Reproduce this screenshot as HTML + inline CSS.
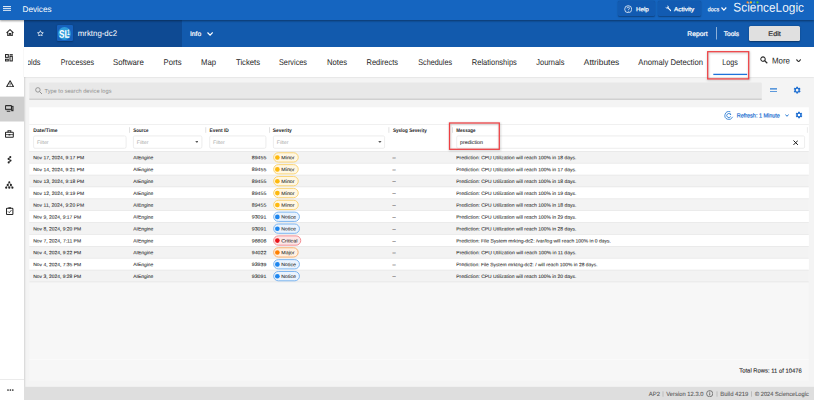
<!DOCTYPE html><html><head><meta charset="utf-8"><title>Devices</title><style>
html,body{margin:0;padding:0;}body{width:814px;height:400px;overflow:hidden;position:relative;background:#f4f4f4;font-family:"Liberation Sans", sans-serif;}
#r{position:absolute;left:0;top:0;width:814px;height:400px;overflow:hidden;}
#r>div,#r>svg{position:absolute;}
#r span{position:absolute;white-space:nowrap;line-height:1;transform-origin:0 50%;display:block;}
#clip{left:28.2px;top:50px;width:16px;height:22px;overflow:hidden;}
</style></head><body><div id="r">
<div style="left:0px;top:19.5px;width:24px;height:380.5px;background:#fff;box-shadow:0 0 2.5px rgba(0,0,0,.28);"></div>
<div style="left:24px;top:46.5px;width:790px;height:30.4px;background:#fff;box-shadow:0 .5px 1.5px rgba(0,0,0,.13);"></div>
<div style="left:24px;top:19.5px;width:790px;height:27px;background:#125aad;"></div>
<div style="left:24px;top:19.5px;width:157.8px;height:27px;background:#0e4a93;"></div>
<div style="left:0px;top:0px;width:814px;height:19.5px;background:#1565c0;box-shadow:0 .5px 2px rgba(0,0,0,.4);"></div>
<div style="left:617.5px;top:1px;width:37.5px;height:15px;background:#125bb2;border-radius:1.5px;box-shadow:0 .5px 1.5px rgba(0,0,0,.35);"></div>
<div style="left:658px;top:1px;width:42.5px;height:15px;background:#125bb2;border-radius:1.5px;box-shadow:0 .5px 1.5px rgba(0,0,0,.35);"></div>
<div style="left:749px;top:25.5px;width:51px;height:15px;background:#e0e0e0;border-radius:1.5px;box-shadow:0 .5px 1.5px rgba(0,0,0,.4);"></div>
<div style="left:56.8px;top:25px;width:16.4px;height:16px;background:#1661bd;border-radius:1px;box-shadow:0 .5px 1.5px rgba(0,0,0,.25);"></div>
<div style="left:58.4px;top:26.5px;width:13px;height:13px;background:radial-gradient(circle at 45% 40%,#35a3e0,#2391d3);border-radius:50%;"></div>
<svg style="left:0;top:0" width="814" height="400" viewBox="0 0 814 400">
<rect x="0.00" y="96.60" width="24.00" height="24.90" fill="#cfcfcf"/>
<rect x="0.00" y="379.10" width="24.00" height="0.70" fill="#e2e2e2"/>
<rect x="24.00" y="386.80" width="790.00" height="13.20" fill="#dedede"/>
<rect x="29.30" y="107.30" width="779.50" height="273.60" fill="#f7f7f7"/>
<rect x="29.30" y="358.90" width="779.50" height="0.70" fill="#fcfcfc"/>
<rect x="716.00" y="27.00" width="0.70" height="12.50" fill="rgba(255,255,255,.75)"/>
<rect x="713.30" y="73.75" width="33.80" height="1.30" fill="#1f72da"/>
<rect x="29.30" y="82.60" width="732.50" height="16.90" fill="#e8e8e8" rx="1"/>
<rect x="29.30" y="98.75" width="732.50" height="0.80" fill="#b9b9b9"/>
<rect x="29.30" y="107.30" width="779.50" height="44.00" fill="#fff"/>
<rect x="29.30" y="124.10" width="779.50" height="0.60" fill="#e6e6e6"/>
<rect x="129.10" y="127.20" width="0.80" height="5.60" fill="#dadada"/>
<rect x="205.40" y="127.20" width="0.80" height="5.60" fill="#dadada"/>
<rect x="269.10" y="127.20" width="0.80" height="5.60" fill="#dadada"/>
<rect x="388.50" y="127.20" width="0.80" height="5.60" fill="#dadada"/>
<rect x="452.10" y="127.20" width="0.80" height="5.60" fill="#dadada"/>
<rect x="806.90" y="127.20" width="0.80" height="5.60" fill="#e6e6e6"/>
<rect x="33.60" y="135.90" width="92.50" height="12.40" fill="#fff" stroke="#e8e8e8" stroke-width="0.8" rx="1.4"/>
<rect x="133.40" y="135.90" width="68.50" height="12.40" fill="#fff" stroke="#e8e8e8" stroke-width="0.8" rx="1.4"/>
<rect x="209.70" y="135.90" width="56.20" height="12.40" fill="#fff" stroke="#e8e8e8" stroke-width="0.8" rx="1.4"/>
<rect x="273.40" y="135.90" width="111.20" height="12.40" fill="#fff" stroke="#e8e8e8" stroke-width="0.8" rx="1.4"/>
<rect x="456.70" y="135.90" width="347.90" height="12.40" fill="#fff" stroke="#e8e8e8" stroke-width="0.8" rx="1.4"/>
<rect x="29.30" y="151.30" width="779.50" height="11.88" fill="#f3f3f3"/>
<rect x="29.30" y="163.18" width="779.50" height="11.88" fill="#fff"/>
<rect x="29.30" y="175.05" width="779.50" height="11.88" fill="#f3f3f3"/>
<rect x="29.30" y="186.93" width="779.50" height="11.88" fill="#fff"/>
<rect x="29.30" y="198.80" width="779.50" height="11.88" fill="#f3f3f3"/>
<rect x="29.30" y="210.68" width="779.50" height="11.88" fill="#fff"/>
<rect x="29.30" y="222.55" width="779.50" height="11.88" fill="#f3f3f3"/>
<rect x="29.30" y="234.43" width="779.50" height="11.88" fill="#fff"/>
<rect x="29.30" y="246.30" width="779.50" height="11.88" fill="#f3f3f3"/>
<rect x="29.30" y="258.18" width="779.50" height="11.88" fill="#fff"/>
<rect x="29.30" y="270.05" width="779.50" height="11.88" fill="#f3f3f3"/>
<rect x="29.30" y="151.00" width="779.50" height="0.60" fill="#e3e3e3"/>
<rect x="29.30" y="162.88" width="779.50" height="0.60" fill="#e3e3e3"/>
<rect x="29.30" y="174.75" width="779.50" height="0.60" fill="#e3e3e3"/>
<rect x="29.30" y="186.62" width="779.50" height="0.60" fill="#e3e3e3"/>
<rect x="29.30" y="198.50" width="779.50" height="0.60" fill="#e3e3e3"/>
<rect x="29.30" y="210.38" width="779.50" height="0.60" fill="#e3e3e3"/>
<rect x="29.30" y="222.25" width="779.50" height="0.60" fill="#e3e3e3"/>
<rect x="29.30" y="234.12" width="779.50" height="0.60" fill="#e3e3e3"/>
<rect x="29.30" y="246.00" width="779.50" height="0.60" fill="#e3e3e3"/>
<rect x="29.30" y="257.88" width="779.50" height="0.60" fill="#e3e3e3"/>
<rect x="29.30" y="269.75" width="779.50" height="0.60" fill="#e3e3e3"/>
<rect x="29.30" y="281.62" width="779.50" height="0.60" fill="#e3e3e3"/>
<rect x="273.65" y="152.75" width="24.60" height="9.30" fill="#fff7e3" stroke="#f9d06a" stroke-width="0.9" rx="4.65"/>
<circle cx="277.35" cy="157.50" r="2.35" fill="#fdb90f"/>
<rect x="273.65" y="164.62" width="24.60" height="9.30" fill="#fff7e3" stroke="#f9d06a" stroke-width="0.9" rx="4.65"/>
<circle cx="277.35" cy="169.38" r="2.35" fill="#fdb90f"/>
<rect x="273.65" y="176.50" width="24.60" height="9.30" fill="#fff7e3" stroke="#f9d06a" stroke-width="0.9" rx="4.65"/>
<circle cx="277.35" cy="181.25" r="2.35" fill="#fdb90f"/>
<rect x="273.65" y="188.38" width="24.60" height="9.30" fill="#fff7e3" stroke="#f9d06a" stroke-width="0.9" rx="4.65"/>
<circle cx="277.35" cy="193.12" r="2.35" fill="#fdb90f"/>
<rect x="273.65" y="200.25" width="24.60" height="9.30" fill="#fff7e3" stroke="#f9d06a" stroke-width="0.9" rx="4.65"/>
<circle cx="277.35" cy="205.00" r="2.35" fill="#fdb90f"/>
<rect x="273.65" y="212.12" width="25.80" height="9.30" fill="#eaf3fd" stroke="#72afee" stroke-width="0.9" rx="4.65"/>
<circle cx="277.35" cy="216.88" r="2.35" fill="#1e86ee"/>
<rect x="273.65" y="224.00" width="25.80" height="9.30" fill="#eaf3fd" stroke="#72afee" stroke-width="0.9" rx="4.65"/>
<circle cx="277.35" cy="228.75" r="2.35" fill="#1e86ee"/>
<rect x="273.65" y="235.88" width="27.10" height="9.30" fill="#fde7e7" stroke="#f2838a" stroke-width="0.9" rx="4.65"/>
<circle cx="277.35" cy="240.62" r="2.35" fill="#ea161c"/>
<rect x="273.65" y="247.75" width="24.50" height="9.30" fill="#fff0e2" stroke="#f8a962" stroke-width="0.9" rx="4.65"/>
<circle cx="277.35" cy="252.50" r="2.35" fill="#ff8000"/>
<rect x="273.65" y="259.62" width="25.80" height="9.30" fill="#eaf3fd" stroke="#72afee" stroke-width="0.9" rx="4.65"/>
<circle cx="277.35" cy="264.38" r="2.35" fill="#1e86ee"/>
<rect x="273.65" y="271.50" width="25.80" height="9.30" fill="#eaf3fd" stroke="#72afee" stroke-width="0.9" rx="4.65"/>
<circle cx="277.35" cy="276.25" r="2.35" fill="#1e86ee"/>
<rect x="662.70" y="391.30" width="0.60" height="5.40" fill="#a5a5a5"/>
<rect x="716.70" y="391.30" width="0.60" height="5.40" fill="#a5a5a5"/>
<rect x="751.20" y="391.30" width="0.60" height="5.40" fill="#a5a5a5"/>
<rect x="708.10" y="52.40" width="41.00" height="27.20" fill="none" stroke="rgba(0,0,0,.2)" stroke-width="1.8" style="filter:blur(.8px)"/>
<rect x="707.70" y="51.70" width="41.00" height="27.20" fill="none" stroke="#ee3f42" stroke-width="1.25"/>
<rect x="449.90" y="123.70" width="49.80" height="26.30" fill="none" stroke="rgba(0,0,0,.2)" stroke-width="1.8" style="filter:blur(.8px)"/>
<rect x="449.50" y="123.00" width="49.80" height="26.30" fill="none" stroke="#ee3f42" stroke-width="1.25"/>
</svg>
<!-- hamburger -->
<svg style="left:3.100px;top:5.900px" width="8" height="5.400" viewBox="0 0 8 5.400"><path d="M0 .6h8M0 2.650h8M0 4.700h8" stroke="#fff" stroke-width=".95"/></svg>
<!-- sidebar: home -->
<svg style="left:6.3px;top:28.8px" width="8" height="7.4" viewBox="0 0 16 15"><path d="M1 8 8 1.3 15 8M3.4 6.6V13.8H6.6V9.4H9.4V13.8H12.6V6.6" fill="none" stroke="#272727" stroke-width="2.1" stroke-linejoin="round"/></svg>
<!-- dashboard -->
<svg style="left:5.2px;top:54px" width="8" height="7.6" viewBox="0 0 16 15"><g fill="none" stroke="#272727" stroke-width="2.1"><rect x="1" y="1" width="5.6" height="5.6"/><rect x="10" y="4.6" width="4.6" height="9.2"/><rect x="1" y="10.4" width="5.6" height="3.4"/></g><rect x="9.2" y="0.2" width="6.4" height="2.6" fill="#272727"/></svg>
<!-- warning -->
<svg style="left:5.9px;top:79.6px" width="8.2" height="7.4" viewBox="0 0 16 14.5"><path d="M8 1.6 14.8 13.4H1.2Z" fill="none" stroke="#272727" stroke-width="2.1" stroke-linejoin="round"/><path d="M8 6v3.6M8 10.8v1.3" stroke="#272727" stroke-width="1.6"/></svg>
<!-- devices (active) -->
<svg style="left:4.900px;top:104.800px" width="9" height="7" viewBox="0 0 18 14"><path d="M1.100 1.100h11.800v8.200H1.100Z" fill="#a9a9a9" stroke="#272727" stroke-width="2"/><path d="M2.200 4.900h9.600" stroke="#e6e6e6" stroke-width="1.300"/><rect x="12.400" y="1.800" width="4.600" height="10.600" fill="#272727"/><rect x="14" y="3.600" width="1.400" height="6" fill="#8a8a8a"/><path d="M3.600 12.600h7" stroke="#272727" stroke-width="1.800"/></svg>
<!-- briefcase -->
<svg style="left:5.2px;top:130.1px" width="8.8" height="7.8" viewBox="0 0 17.6 15.6"><g fill="none" stroke="#272727" stroke-width="2.1"><rect x="1" y="4.4" width="15.6" height="10.2" rx="1"/><path d="M6 4.4V1.6h5.6V4.4"/><path d="M1 9.2h15.6" stroke-width="1.5"/></g><rect x="7" y="8" width="3.6" height="2.8" fill="#272727"/></svg>
<!-- nodes -->
<svg style="left:7.2px;top:156.2px" width="5.2" height="7.6" viewBox="0 0 10.4 15.2"><g fill="#272727"><circle cx="6.6" cy="2.2" r="2.1"/><circle cx="3.2" cy="5.8" r="2.1"/><circle cx="7" cy="9.2" r="2.1"/><circle cx="3.4" cy="12.8" r="2.1"/></g><path d="M6.6 2.2 3.2 5.8 7 9.2 3.4 12.8" fill="none" stroke="#272727" stroke-width="1.3"/></svg>
<!-- hierarchy -->
<svg style="left:5.2px;top:181.4px" width="8.6" height="8" viewBox="0 0 17.2 16"><g fill="#272727"><circle cx="8.6" cy="2.4" r="2"/><circle cx="5.4" cy="7.8" r="2.1"/><circle cx="11.8" cy="7.8" r="2.1"/><circle cx="2.4" cy="13.4" r="2.2"/><circle cx="8.6" cy="13.4" r="2.2"/><circle cx="14.8" cy="13.4" r="2.2"/></g><path d="M8.6 2.4 5.4 7.8 2.4 13.4M8.6 2.4 11.8 7.8 14.8 13.4M5.4 7.8 8.6 13.4 11.8 7.8" fill="none" stroke="#272727" stroke-width="1"/></svg>
<!-- checklist -->
<svg style="left:6.4px;top:206.8px" width="7.4" height="8" viewBox="0 0 14.8 16"><rect x="1" y="2.4" width="12.8" height="12.6" rx="1.6" fill="none" stroke="#272727" stroke-width="2.1"/><rect x="4.8" y="0.6" width="5.2" height="2.6" fill="#272727"/><path d="M4 8.8 6.6 11.4 11 6" fill="none" stroke="#272727" stroke-width="1.6"/></svg>
<!-- dots -->
<svg style="left:6.8px;top:389px" width="6.8" height="2" viewBox="0 0 6.8 2"><g fill="#272727"><circle cx="1" cy="1" r=".85"/><circle cx="3.4" cy="1" r=".85"/><circle cx="5.8" cy="1" r=".85"/></g></svg>
<!-- star -->
<svg style="left:36.8px;top:29.8px" width="6.8" height="6.6" viewBox="0 0 24 23"><path d="M12 2.2l3 6.6 7.2.8-5.4 4.9 1.5 7.1L12 18l-6.3 3.6 1.5-7.1L1.8 9.6 9 8.8z" fill="none" stroke="#fff" stroke-width="2.6" stroke-linejoin="round"/></svg>
<!-- info chevron -->
<svg style="left:206.6px;top:31.6px" width="6.2" height="4" viewBox="0 0 6.2 4"><path d="M.5.5 3.1 3.200 5.700.5" fill="none" stroke="#fff" stroke-width="1.150"/></svg>
<!-- help icon -->
<svg style="left:623.8px;top:4.9px" width="8.4" height="8.4" viewBox="0 0 17.2 17.2"><circle cx="8.6" cy="8.6" r="7.2" fill="none" stroke="#fff" stroke-width="1.5"/><path d="M6.2 6.8c0-3.2 5-3.2 5 0 0 1.8-2.4 1.8-2.4 3.8" fill="none" stroke="#fff" stroke-width="1.5"/><circle cx="8.7" cy="12.8" r="1" fill="#fff"/></svg>
<!-- wrench -->
<svg style="left:664.6px;top:5.4px" width="6.6" height="6.6" viewBox="0 0 13.2 13.2"><path d="M1 3.6a3.4 3.4 0 0 0 4.700 3.200l5 5.200a1.100 1.100 0 0 0 1.700-1.500l-5.200-5.100A3.400 3.400 0 0 0 3.800.8l1.800 1.900-.7 2-2 .6z" fill="#fff"/></svg>
<!-- docs chevron -->
<svg style="left:721.3px;top:6.9px" width="5.8" height="4" viewBox="0 0 5.8 4"><path d="M.5.5 2.9 3.1 5.3.5" fill="none" stroke="#fff" stroke-width="1.15"/></svg>
<!-- logo dots -->
<svg style="left:746px;top:.8px" width="13" height="2.800" viewBox="0 0 13 2.800"><circle cx="1.600" cy="1.400" r="1.100" fill="#f5831f"/><circle cx="4.900" cy="1.400" r="1.100" fill="#f9c21a"/><circle cx="8.200" cy="1.400" r="1.100" fill="#2a9df0"/><circle cx="11.500" cy="1.400" r="1.100" fill="#5cc03a"/></svg>
<svg style="left:793.400px;top:5.800px" width="1.800" height="1.800" viewBox="0 0 1.800 1.800"><circle cx=".9" cy=".9" r=".8" fill="#5cc03a"/></svg>
<!-- tabs search -->
<svg style="left:759.6px;top:56.300px" width="8" height="8" viewBox="0 0 8 8"><circle cx="3" cy="3.100" r="2.250" fill="none" stroke="#2c2c2c" stroke-width="1.050"/><path d="M4.700 4.800 7.300 7.300" stroke="#2c2c2c" stroke-width="1.200"/></svg>
<!-- more chevron -->
<svg style="left:795.800px;top:58.800px" width="5.200" height="3.400" viewBox="0 0 5.200 3.400"><path d="M.4.500 2.600 2.800 4.800.5" fill="none" stroke="#333" stroke-width="1.100"/></svg>
<!-- searchbar icon -->
<svg style="left:35.300px;top:86.800px" width="7.600" height="7.600" viewBox="0 0 7.600 7.600"><circle cx="2.900" cy="2.900" r="2.250" fill="none" stroke="#909090" stroke-width=".9"/><path d="M4.600 4.600 7.100 7.100" stroke="#909090" stroke-width="1"/></svg>
<!-- equals icon -->
<svg style="left:769.8px;top:87.8px" width="7" height="4.6" viewBox="0 0 7 4.6"><path d="M0 .8h7M0 3.8h7" stroke="#2a7bd3" stroke-width="1.3"/></svg>
<!-- gear 1 -->
<svg style="left:793.15px;top:85.9px" width="8.3" height="8.3" viewBox="0 0 24 24"><path fill="#1f6fd1" d="M19.4 13c0-.3.1-.6.1-1s0-.7-.1-1l2.100-1.600c.2-.2.200-.4.100-.600l-2-3.500c-.1-.2-.4-.3-.6-.2l-2.500 1c-.5-.4-1.100-.7-1.700-1l-.4-2.600c0-.3-.2-.5-.5-.5h-4c-.3 0-.5.200-.5.400l-.4 2.700c-.6.200-1.100.6-1.700 1l-2.500-1c-.2-.1-.5 0-.6.200l-2 3.500c-.1.200-.1.500.1.600L4.600 11c0 .3-.1.600-.1 1s0 .7.100 1l-2.100 1.600c-.2.200-.2.400-.1.600l2 3.500c.1.200.4.300.6.200l2.500-1c.5.400 1.100.7 1.700 1l.4 2.600c0 .3.200.5.500.5h4c.3 0 .5-.2.500-.4l.4-2.700c.6-.2 1.100-.6 1.700-1l2.500 1c.2.100.5 0 .6-.2l2-3.500c.1-.2.100-.5-.1-.6L19.400 13zM12 15.800a3.800 3.800 0 1 1 0-7.600 3.800 3.800 0 0 1 0 7.600z"/></svg>
<!-- refresh -->
<svg style="left:720px;top:106px" width="18" height="18" viewBox="0 0 18 18"><g fill="none" stroke="#2a7bd3" stroke-width=".85" stroke-linecap="round"><path d="M9.940 5.640A4 4 0 1 0 12.530 11.190"/><path d="M10.400 8.100A2.100 2.100 0 1 0 10.510 10.850"/></g><circle cx="10.500" cy="8.250" r=".7" fill="#2a7bd3"/></svg>
<!-- refresh chevron -->
<svg style="left:784.6px;top:114px" width="4" height="3" viewBox="0 0 4 3"><path d="M.4.5 2 2.300 3.600.5" fill="none" stroke="#2a7bd3" stroke-width="1"/></svg>
<!-- gear 2 -->
<svg style="left:795px;top:111.4px" width="8" height="8" viewBox="0 0 24 24"><path fill="#1f6fd1" d="M19.4 13c0-.3.1-.6.1-1s0-.7-.1-1l2.100-1.600c.2-.2.200-.4.100-.600l-2-3.500c-.1-.2-.4-.3-.6-.2l-2.500 1c-.5-.4-1.100-.7-1.700-1l-.4-2.600c0-.3-.2-.5-.5-.5h-4c-.3 0-.5.200-.5.400l-.4 2.700c-.6.200-1.100.6-1.700 1l-2.500-1c-.2-.1-.5 0-.6.200l-2 3.500c-.1.200-.1.500.1.600L4.600 11c0 .3-.1.600-.1 1s0 .7.100 1l-2.100 1.600c-.2.200-.2.400-.1.600l2 3.500c.1.200.4.300.6.200l2.500-1c.5.400 1.100.7 1.700 1l.4 2.600c0 .3.200.5.500.5h4c.3 0 .5-.2.500-.4l.4-2.700c.6-.2 1.100-.6 1.700-1l2.500 1c.2.100.5 0 .6-.2l2-3.500c.1-.2.100-.5-.1-.6L19.400 13zM12 15.800a3.800 3.800 0 1 1 0-7.600 3.800 3.800 0 0 1 0 7.600z"/></svg>
<!-- dropdown arrows -->
<svg style="left:194.6px;top:141px" width="3.8" height="2.2" viewBox="0 0 3.8 2.2"><path d="M.2 0h3.400L1.900 2z" fill="#5a5a5a"/></svg>
<svg style="left:377.900px;top:141px" width="3.8" height="2.2" viewBox="0 0 3.8 2.2"><path d="M.2 0h3.400L1.900 2z" fill="#5a5a5a"/></svg>
<!-- clear x -->
<svg style="left:792.8px;top:139.600px" width="5.4" height="5.400" viewBox="0 0 5.4 5.400"><path d="M.5.500 4.900 4.900M4.900.5.500 4.900" stroke="#1a1a1a" stroke-width="1.0"/></svg>
<!-- footer info -->
<svg style="left:705.800px;top:390px" width="7.400" height="7.400" viewBox="0 0 14.800 14.800"><circle cx="7.400" cy="7.400" r="6.200" fill="none" stroke="#4a4a4a" stroke-width="1.300"/><path d="M7.400 6.400v4.400" stroke="#4a4a4a" stroke-width="1.500"/><circle cx="7.400" cy="4.200" r="1" fill="#4a4a4a"/></svg>
<!-- SL1 text -->
<span style="left:59px;top:28px;font-size:11px;font-weight:700;color:#fff;transform:translate(0.00px,0.70px) scaleX(0.74) skewY(.05deg)">SL</span>
<span style="left:67px;top:28px;font-size:8px;font-weight:700;color:#fff;transform:translate(0.10px,0.90px) scaleX(0.62) skewY(.05deg)">1</span>

<span style="left:22px;top:4px;font-size:8.3px;color:#fff;font-weight:400;transform:translate(0.50px,0.90px) scaleX(0.9859) skewY(.05deg);">Devices</span>
<span style="left:636px;top:6px;font-size:6.0px;color:#fff;font-weight:400;transform:translate(0.00px,0.20px) scaleX(1.0370) skewY(.05deg);-webkit-text-stroke:.22px currentColor;">Help</span>
<span style="left:674px;top:6px;font-size:6.0px;color:#fff;font-weight:400;transform:translate(0.00px,0.20px) scaleX(1.0675) skewY(.05deg);-webkit-text-stroke:.22px currentColor;">Activity</span>
<span style="left:707px;top:6px;font-size:6.0px;color:#fff;font-weight:400;transform:translate(0.80px,0.20px) scaleX(0.8985) skewY(.05deg);-webkit-text-stroke:.15px currentColor;">docs</span>
<span style="left:733px;top:1px;font-size:12.6px;color:rgba(255,255,255,.95);font-weight:400;transform:translate(0.30px,0.60px) scaleX(0.9436) skewY(.05deg);">ScienceLogic</span>
<span style="left:77px;top:30px;font-size:8.1px;color:#fff;font-weight:400;transform:translate(0.80px,0.00px) scaleX(0.9683) skewY(.05deg);">mrktng-dc2</span>
<span style="left:190px;top:31px;font-size:6.6px;color:#fff;font-weight:400;transform:translate(0.00px,0.00px) scaleX(1.0182) skewY(.05deg);-webkit-text-stroke:.2px currentColor;">Info</span>
<span style="left:687px;top:31px;font-size:6.6px;color:#fff;font-weight:400;transform:translate(0.30px,0.10px) scaleX(1.0204) skewY(.05deg);-webkit-text-stroke:.22px currentColor;">Report</span>
<span style="left:723px;top:31px;font-size:6.6px;color:#fff;font-weight:400;transform:translate(0.80px,0.10px) scaleX(0.9866) skewY(.05deg);-webkit-text-stroke:.22px currentColor;">Tools</span>
<span style="left:768px;top:31px;font-size:6.6px;color:#333;font-weight:400;transform:translate(0.30px,0.10px) scaleX(1.0989) skewY(.05deg);-webkit-text-stroke:.22px currentColor;">Edit</span>
<span style="left:60px;top:58px;font-size:8.3px;color:#262626;font-weight:400;transform:translate(0.80px,0.00px) scaleX(0.8571) skewY(.05deg);">Processes</span>
<span style="left:113px;top:58px;font-size:8.3px;color:#262626;font-weight:400;transform:translate(0.00px,0.00px) scaleX(0.9405) skewY(.05deg);">Software</span>
<span style="left:163px;top:58px;font-size:8.3px;color:#262626;font-weight:400;transform:translate(0.50px,0.00px) scaleX(0.9290) skewY(.05deg);">Ports</span>
<span style="left:201px;top:58px;font-size:8.3px;color:#262626;font-weight:400;transform:translate(0.00px,0.00px) scaleX(0.9293) skewY(.05deg);">Map</span>
<span style="left:236px;top:58px;font-size:8.3px;color:#262626;font-weight:400;transform:translate(0.00px,0.00px) scaleX(0.9242) skewY(.05deg);">Tickets</span>
<span style="left:279px;top:58px;font-size:8.3px;color:#262626;font-weight:400;transform:translate(0.00px,0.00px) scaleX(0.8797) skewY(.05deg);">Services</span>
<span style="left:327px;top:58px;font-size:8.3px;color:#262626;font-weight:400;transform:translate(0.00px,0.00px) scaleX(0.9222) skewY(.05deg);">Notes</span>
<span style="left:366px;top:58px;font-size:8.3px;color:#262626;font-weight:400;transform:translate(0.50px,0.00px) scaleX(0.8988) skewY(.05deg);">Redirects</span>
<span style="left:418px;top:58px;font-size:8.3px;color:#262626;font-weight:400;transform:translate(0.30px,0.00px) scaleX(0.8697) skewY(.05deg);">Schedules</span>
<span style="left:471px;top:58px;font-size:8.3px;color:#262626;font-weight:400;transform:translate(0.80px,0.00px) scaleX(0.9034) skewY(.05deg);">Relationships</span>
<span style="left:536px;top:58px;font-size:8.3px;color:#262626;font-weight:400;transform:translate(0.30px,0.00px) scaleX(0.8988) skewY(.05deg);">Journals</span>
<span style="left:583px;top:58px;font-size:8.3px;color:#262626;font-weight:400;transform:translate(0.80px,0.00px) scaleX(1.0125) skewY(.05deg);">Attributes</span>
<span style="left:638px;top:58px;font-size:8.3px;color:#262626;font-weight:400;transform:translate(0.30px,0.00px) scaleX(0.9291) skewY(.05deg);">Anomaly Detection</span>
<span style="left:722px;top:58px;font-size:8.3px;color:#262626;font-weight:400;transform:translate(0.30px,0.00px) scaleX(0.8611) skewY(.05deg);">Logs</span>
<span style="left:772px;top:56px;font-size:8.3px;color:#262626;font-weight:400;transform:translate(0.00px,0.40px) scaleX(0.9521) skewY(.05deg);">More</span>
<span style="left:44px;top:88px;font-size:5.5px;color:#8c8c8c;font-weight:400;transform:translate(0.50px,0.80px) scaleX(1.0288) skewY(.05deg);">Type to search device logs</span>
<span style="left:736px;top:112px;font-size:6.0px;color:#1f70d2;font-weight:400;transform:translate(0.80px,0.50px) scaleX(0.9080) skewY(.05deg);-webkit-text-stroke:.22px currentColor;">Refresh: 1 Minute</span>
<span style="left:33px;top:128px;font-size:5.1px;color:#262626;font-weight:700;transform:translate(0.30px,0.10px) scaleX(0.9973) skewY(.05deg);">Date/Time</span>
<span style="left:133px;top:128px;font-size:5.1px;color:#262626;font-weight:700;transform:translate(0.30px,0.10px) scaleX(0.8796) skewY(.05deg);">Source</span>
<span style="left:209px;top:128px;font-size:5.1px;color:#262626;font-weight:700;transform:translate(0.50px,0.10px) scaleX(0.9465) skewY(.05deg);">Event ID</span>
<span style="left:272px;top:128px;font-size:5.1px;color:#262626;font-weight:700;transform:translate(0.80px,0.10px) scaleX(0.9582) skewY(.05deg);">Severity</span>
<span style="left:393px;top:128px;font-size:5.1px;color:#262626;font-weight:700;transform:translate(0.00px,0.10px) scaleX(0.8906) skewY(.05deg);">Syslog Severity</span>
<span style="left:456px;top:128px;font-size:5.1px;color:#262626;font-weight:700;transform:translate(0.30px,0.10px) scaleX(0.8917) skewY(.05deg);">Message</span>
<span style="left:36px;top:140px;font-size:5.0px;color:#a9a9a9;font-weight:400;transform:translate(0.90px,0.00px) scaleX(1.0517) skewY(.05deg);">Filter</span>
<span style="left:136px;top:140px;font-size:5.0px;color:#a9a9a9;font-weight:400;transform:translate(0.80px,0.00px) scaleX(1.0517) skewY(.05deg);">Filter</span>
<span style="left:213px;top:140px;font-size:5.0px;color:#a9a9a9;font-weight:400;transform:translate(0.00px,0.00px) scaleX(1.0517) skewY(.05deg);">Filter</span>
<span style="left:276px;top:140px;font-size:5.0px;color:#a9a9a9;font-weight:400;transform:translate(0.80px,0.00px) scaleX(1.0517) skewY(.05deg);">Filter</span>
<span style="left:460px;top:140px;font-size:5.3px;color:#262626;font-weight:400;transform:translate(0.00px,0.10px) scaleX(1.0014) skewY(.05deg);-webkit-text-stroke:.06px currentColor;">prediction</span>
<span style="left:33px;top:156px;font-size:4.85px;color:#262626;font-weight:400;transform:translate(0.20px,0.25px) scaleX(1.0273) skewY(.05deg);-webkit-text-stroke:.06px currentColor;">Nov 17, 2024, 9:17 PM</span>
<span style="left:133px;top:156px;font-size:4.85px;color:#262626;font-weight:400;transform:translate(0.30px,0.25px) scaleX(1.0167) skewY(.05deg);-webkit-text-stroke:.06px currentColor;">AIEngine</span>
<span style="left:251px;top:156px;font-size:4.85px;color:#262626;font-weight:400;transform:translate(0.80px,0.25px) scaleX(1.0753) skewY(.05deg);-webkit-text-stroke:.06px currentColor;">89455</span>
<span style="left:281px;top:156px;font-size:4.85px;color:#262626;font-weight:400;transform:translate(0.30px,0.25px) scaleX(1.0969) skewY(.05deg);-webkit-text-stroke:.06px currentColor;">Minor</span>
<span style="left:392px;top:155px;font-size:5.25px;color:#333;font-weight:400;transform:translate(0.60px,0.35px) scaleX(1.0610) skewY(.05deg);-webkit-text-stroke:.2px currentColor;">–</span>
<span style="left:456px;top:156px;font-size:4.85px;color:#262626;font-weight:400;transform:translate(0.30px,0.25px) scaleX(1.0270) skewY(.05deg);-webkit-text-stroke:.06px currentColor;">Prediction: CPU Utilization will reach 100% in 18 days.</span>
<span style="left:33px;top:168px;font-size:4.85px;color:#262626;font-weight:400;transform:translate(0.20px,0.12px) scaleX(1.0273) skewY(.05deg);-webkit-text-stroke:.06px currentColor;">Nov 14, 2024, 9:21 PM</span>
<span style="left:133px;top:168px;font-size:4.85px;color:#262626;font-weight:400;transform:translate(0.30px,0.12px) scaleX(1.0167) skewY(.05deg);-webkit-text-stroke:.06px currentColor;">AIEngine</span>
<span style="left:251px;top:168px;font-size:4.85px;color:#262626;font-weight:400;transform:translate(0.80px,0.12px) scaleX(1.0753) skewY(.05deg);-webkit-text-stroke:.06px currentColor;">89455</span>
<span style="left:281px;top:168px;font-size:4.85px;color:#262626;font-weight:400;transform:translate(0.30px,0.12px) scaleX(1.0969) skewY(.05deg);-webkit-text-stroke:.06px currentColor;">Minor</span>
<span style="left:392px;top:167px;font-size:5.25px;color:#333;font-weight:400;transform:translate(0.60px,0.22px) scaleX(1.0610) skewY(.05deg);-webkit-text-stroke:.2px currentColor;">–</span>
<span style="left:456px;top:168px;font-size:4.85px;color:#262626;font-weight:400;transform:translate(0.30px,0.12px) scaleX(1.0270) skewY(.05deg);-webkit-text-stroke:.06px currentColor;">Prediction: CPU Utilization will reach 100% in 17 days.</span>
<span style="left:33px;top:180px;font-size:4.85px;color:#262626;font-weight:400;transform:translate(0.20px,0.00px) scaleX(1.0273) skewY(.05deg);-webkit-text-stroke:.06px currentColor;">Nov 13, 2024, 9:18 PM</span>
<span style="left:133px;top:180px;font-size:4.85px;color:#262626;font-weight:400;transform:translate(0.30px,0.00px) scaleX(1.0167) skewY(.05deg);-webkit-text-stroke:.06px currentColor;">AIEngine</span>
<span style="left:251px;top:180px;font-size:4.85px;color:#262626;font-weight:400;transform:translate(0.80px,0.00px) scaleX(1.0753) skewY(.05deg);-webkit-text-stroke:.06px currentColor;">89455</span>
<span style="left:281px;top:180px;font-size:4.85px;color:#262626;font-weight:400;transform:translate(0.30px,0.00px) scaleX(1.0969) skewY(.05deg);-webkit-text-stroke:.06px currentColor;">Minor</span>
<span style="left:392px;top:179px;font-size:5.25px;color:#333;font-weight:400;transform:translate(0.60px,0.10px) scaleX(1.0610) skewY(.05deg);-webkit-text-stroke:.2px currentColor;">–</span>
<span style="left:456px;top:180px;font-size:4.85px;color:#262626;font-weight:400;transform:translate(0.30px,0.00px) scaleX(1.0270) skewY(.05deg);-webkit-text-stroke:.06px currentColor;">Prediction: CPU Utilization will reach 100% in 18 days.</span>
<span style="left:33px;top:191px;font-size:4.85px;color:#262626;font-weight:400;transform:translate(0.20px,0.88px) scaleX(1.0273) skewY(.05deg);-webkit-text-stroke:.06px currentColor;">Nov 12, 2024, 9:19 PM</span>
<span style="left:133px;top:191px;font-size:4.85px;color:#262626;font-weight:400;transform:translate(0.30px,0.88px) scaleX(1.0167) skewY(.05deg);-webkit-text-stroke:.06px currentColor;">AIEngine</span>
<span style="left:251px;top:191px;font-size:4.85px;color:#262626;font-weight:400;transform:translate(0.80px,0.88px) scaleX(1.0753) skewY(.05deg);-webkit-text-stroke:.06px currentColor;">89455</span>
<span style="left:281px;top:191px;font-size:4.85px;color:#262626;font-weight:400;transform:translate(0.30px,0.88px) scaleX(1.0969) skewY(.05deg);-webkit-text-stroke:.06px currentColor;">Minor</span>
<span style="left:392px;top:190px;font-size:5.25px;color:#333;font-weight:400;transform:translate(0.60px,0.97px) scaleX(1.0610) skewY(.05deg);-webkit-text-stroke:.2px currentColor;">–</span>
<span style="left:456px;top:191px;font-size:4.85px;color:#262626;font-weight:400;transform:translate(0.30px,0.88px) scaleX(1.0270) skewY(.05deg);-webkit-text-stroke:.06px currentColor;">Prediction: CPU Utilization will reach 100% in 19 days.</span>
<span style="left:33px;top:203px;font-size:4.85px;color:#262626;font-weight:400;transform:translate(0.20px,0.75px) scaleX(1.0348) skewY(.05deg);-webkit-text-stroke:.06px currentColor;">Nov 11, 2024, 9:20 PM</span>
<span style="left:133px;top:203px;font-size:4.85px;color:#262626;font-weight:400;transform:translate(0.30px,0.75px) scaleX(1.0167) skewY(.05deg);-webkit-text-stroke:.06px currentColor;">AIEngine</span>
<span style="left:251px;top:203px;font-size:4.85px;color:#262626;font-weight:400;transform:translate(0.80px,0.75px) scaleX(1.0753) skewY(.05deg);-webkit-text-stroke:.06px currentColor;">89455</span>
<span style="left:281px;top:203px;font-size:4.85px;color:#262626;font-weight:400;transform:translate(0.30px,0.75px) scaleX(1.0969) skewY(.05deg);-webkit-text-stroke:.06px currentColor;">Minor</span>
<span style="left:392px;top:202px;font-size:5.25px;color:#333;font-weight:400;transform:translate(0.60px,0.85px) scaleX(1.0610) skewY(.05deg);-webkit-text-stroke:.2px currentColor;">–</span>
<span style="left:456px;top:203px;font-size:4.85px;color:#262626;font-weight:400;transform:translate(0.30px,0.75px) scaleX(1.0270) skewY(.05deg);-webkit-text-stroke:.06px currentColor;">Prediction: CPU Utilization will reach 100% in 18 days.</span>
<span style="left:33px;top:215px;font-size:4.85px;color:#262626;font-weight:400;transform:translate(0.20px,0.62px) scaleX(1.0222) skewY(.05deg);-webkit-text-stroke:.06px currentColor;">Nov 9, 2024, 9:17 PM</span>
<span style="left:133px;top:215px;font-size:4.85px;color:#262626;font-weight:400;transform:translate(0.30px,0.62px) scaleX(1.0167) skewY(.05deg);-webkit-text-stroke:.06px currentColor;">AIEngine</span>
<span style="left:251px;top:215px;font-size:4.85px;color:#262626;font-weight:400;transform:translate(0.80px,0.62px) scaleX(1.0753) skewY(.05deg);-webkit-text-stroke:.06px currentColor;">93091</span>
<span style="left:281px;top:215px;font-size:4.85px;color:#262626;font-weight:400;transform:translate(0.30px,0.62px) scaleX(1.0703) skewY(.05deg);-webkit-text-stroke:.06px currentColor;">Notice</span>
<span style="left:392px;top:214px;font-size:5.25px;color:#333;font-weight:400;transform:translate(0.60px,0.72px) scaleX(1.0610) skewY(.05deg);-webkit-text-stroke:.2px currentColor;">–</span>
<span style="left:456px;top:215px;font-size:4.85px;color:#262626;font-weight:400;transform:translate(0.30px,0.62px) scaleX(1.0270) skewY(.05deg);-webkit-text-stroke:.06px currentColor;">Prediction: CPU Utilization will reach 100% in 29 days.</span>
<span style="left:33px;top:227px;font-size:4.85px;color:#262626;font-weight:400;transform:translate(0.20px,0.50px) scaleX(1.0222) skewY(.05deg);-webkit-text-stroke:.06px currentColor;">Nov 8, 2024, 9:20 PM</span>
<span style="left:133px;top:227px;font-size:4.85px;color:#262626;font-weight:400;transform:translate(0.30px,0.50px) scaleX(1.0167) skewY(.05deg);-webkit-text-stroke:.06px currentColor;">AIEngine</span>
<span style="left:251px;top:227px;font-size:4.85px;color:#262626;font-weight:400;transform:translate(0.80px,0.50px) scaleX(1.0753) skewY(.05deg);-webkit-text-stroke:.06px currentColor;">93091</span>
<span style="left:281px;top:227px;font-size:4.85px;color:#262626;font-weight:400;transform:translate(0.30px,0.50px) scaleX(1.0703) skewY(.05deg);-webkit-text-stroke:.06px currentColor;">Notice</span>
<span style="left:392px;top:226px;font-size:5.25px;color:#333;font-weight:400;transform:translate(0.60px,0.60px) scaleX(1.0610) skewY(.05deg);-webkit-text-stroke:.2px currentColor;">–</span>
<span style="left:456px;top:227px;font-size:4.85px;color:#262626;font-weight:400;transform:translate(0.30px,0.50px) scaleX(1.0270) skewY(.05deg);-webkit-text-stroke:.06px currentColor;">Prediction: CPU Utilization will reach 100% in 28 days.</span>
<span style="left:33px;top:239px;font-size:4.85px;color:#262626;font-weight:400;transform:translate(0.20px,0.38px) scaleX(1.0301) skewY(.05deg);-webkit-text-stroke:.06px currentColor;">Nov 7, 2024, 7:11 PM</span>
<span style="left:133px;top:239px;font-size:4.85px;color:#262626;font-weight:400;transform:translate(0.30px,0.38px) scaleX(1.0167) skewY(.05deg);-webkit-text-stroke:.06px currentColor;">AIEngine</span>
<span style="left:251px;top:239px;font-size:4.85px;color:#262626;font-weight:400;transform:translate(0.80px,0.38px) scaleX(1.0753) skewY(.05deg);-webkit-text-stroke:.06px currentColor;">96606</span>
<span style="left:281px;top:239px;font-size:4.85px;color:#262626;font-weight:400;transform:translate(0.30px,0.38px) scaleX(1.0802) skewY(.05deg);-webkit-text-stroke:.06px currentColor;">Critical</span>
<span style="left:392px;top:238px;font-size:5.25px;color:#333;font-weight:400;transform:translate(0.60px,0.47px) scaleX(1.0610) skewY(.05deg);-webkit-text-stroke:.2px currentColor;">–</span>
<span style="left:456px;top:239px;font-size:4.85px;color:#262626;font-weight:400;transform:translate(0.30px,0.38px) scaleX(1.0230) skewY(.05deg);-webkit-text-stroke:.06px currentColor;">Prediction: File System mrktng-dc2: /var/log will reach 100% in 0 days.</span>
<span style="left:33px;top:251px;font-size:4.85px;color:#262626;font-weight:400;transform:translate(0.20px,0.25px) scaleX(1.0222) skewY(.05deg);-webkit-text-stroke:.06px currentColor;">Nov 4, 2024, 9:22 PM</span>
<span style="left:133px;top:251px;font-size:4.85px;color:#262626;font-weight:400;transform:translate(0.30px,0.25px) scaleX(1.0167) skewY(.05deg);-webkit-text-stroke:.06px currentColor;">AIEngine</span>
<span style="left:251px;top:251px;font-size:4.85px;color:#262626;font-weight:400;transform:translate(0.80px,0.25px) scaleX(1.0753) skewY(.05deg);-webkit-text-stroke:.06px currentColor;">94022</span>
<span style="left:281px;top:251px;font-size:4.85px;color:#262626;font-weight:400;transform:translate(0.30px,0.25px) scaleX(1.0887) skewY(.05deg);-webkit-text-stroke:.06px currentColor;">Major</span>
<span style="left:392px;top:250px;font-size:5.25px;color:#333;font-weight:400;transform:translate(0.60px,0.35px) scaleX(1.0610) skewY(.05deg);-webkit-text-stroke:.2px currentColor;">–</span>
<span style="left:456px;top:251px;font-size:4.85px;color:#262626;font-weight:400;transform:translate(0.30px,0.25px) scaleX(1.0302) skewY(.05deg);-webkit-text-stroke:.06px currentColor;">Prediction: CPU Utilization will reach 100% in 11 days.</span>
<span style="left:33px;top:263px;font-size:4.85px;color:#262626;font-weight:400;transform:translate(0.20px,0.12px) scaleX(1.0222) skewY(.05deg);-webkit-text-stroke:.06px currentColor;">Nov 4, 2024, 7:35 PM</span>
<span style="left:133px;top:263px;font-size:4.85px;color:#262626;font-weight:400;transform:translate(0.30px,0.12px) scaleX(1.0167) skewY(.05deg);-webkit-text-stroke:.06px currentColor;">AIEngine</span>
<span style="left:251px;top:263px;font-size:4.85px;color:#262626;font-weight:400;transform:translate(0.80px,0.12px) scaleX(1.0753) skewY(.05deg);-webkit-text-stroke:.06px currentColor;">93939</span>
<span style="left:281px;top:263px;font-size:4.85px;color:#262626;font-weight:400;transform:translate(0.30px,0.12px) scaleX(1.0703) skewY(.05deg);-webkit-text-stroke:.06px currentColor;">Notice</span>
<span style="left:392px;top:262px;font-size:5.25px;color:#333;font-weight:400;transform:translate(0.60px,0.23px) scaleX(1.0610) skewY(.05deg);-webkit-text-stroke:.2px currentColor;">–</span>
<span style="left:456px;top:263px;font-size:4.85px;color:#262626;font-weight:400;transform:translate(0.30px,0.12px) scaleX(1.0145) skewY(.05deg);-webkit-text-stroke:.06px currentColor;">Prediction: File System mrktng-dc2: / will reach 100% in 28 days.</span>
<span style="left:33px;top:275px;font-size:4.85px;color:#262626;font-weight:400;transform:translate(0.20px,0.00px) scaleX(1.0222) skewY(.05deg);-webkit-text-stroke:.06px currentColor;">Nov 3, 2024, 9:28 PM</span>
<span style="left:133px;top:275px;font-size:4.85px;color:#262626;font-weight:400;transform:translate(0.30px,0.00px) scaleX(1.0167) skewY(.05deg);-webkit-text-stroke:.06px currentColor;">AIEngine</span>
<span style="left:251px;top:275px;font-size:4.85px;color:#262626;font-weight:400;transform:translate(0.80px,0.00px) scaleX(1.0753) skewY(.05deg);-webkit-text-stroke:.06px currentColor;">93091</span>
<span style="left:281px;top:275px;font-size:4.85px;color:#262626;font-weight:400;transform:translate(0.30px,0.00px) scaleX(1.0703) skewY(.05deg);-webkit-text-stroke:.06px currentColor;">Notice</span>
<span style="left:392px;top:274px;font-size:5.25px;color:#333;font-weight:400;transform:translate(0.60px,0.10px) scaleX(1.0610) skewY(.05deg);-webkit-text-stroke:.2px currentColor;">–</span>
<span style="left:456px;top:275px;font-size:4.85px;color:#262626;font-weight:400;transform:translate(0.30px,0.00px) scaleX(1.0270) skewY(.05deg);-webkit-text-stroke:.06px currentColor;">Prediction: CPU Utilization will reach 100% in 20 days.</span>
<span style="left:739px;top:367px;font-size:6.0px;color:#262626;font-weight:400;transform:translate(0.30px,0.60px) scaleX(0.9775) skewY(.05deg);-webkit-text-stroke:.1px currentColor;">Total Rows: 11 of 10476</span>
<span style="left:648px;top:391px;font-size:6.0px;color:#585858;font-weight:400;transform:translate(0.80px,0.00px) scaleX(0.9873) skewY(.05deg);-webkit-text-stroke:.08px currentColor;">AP2</span>
<span style="left:666px;top:391px;font-size:6.0px;color:#585858;font-weight:400;transform:translate(0.30px,0.00px) scaleX(0.9694) skewY(.05deg);-webkit-text-stroke:.08px currentColor;">Version 12.3.0</span>
<span style="left:720px;top:391px;font-size:6.0px;color:#585858;font-weight:400;transform:translate(0.30px,0.00px) scaleX(0.9873) skewY(.05deg);-webkit-text-stroke:.08px currentColor;">Build 4219</span>
<span style="left:755px;top:391px;font-size:6.0px;color:#585858;font-weight:400;transform:translate(0.00px,0.00px) scaleX(0.9472) skewY(.05deg);-webkit-text-stroke:.08px currentColor;">© 2024 ScienceLogic</span>
<div id="clip"><span style="left:-23.73px;top:8px;font-size:8.3px;color:#262626;transform:translateY(0.00px) scaleX(.89) skewY(.05deg)">Thresholds</span></div>
</div></body></html>
